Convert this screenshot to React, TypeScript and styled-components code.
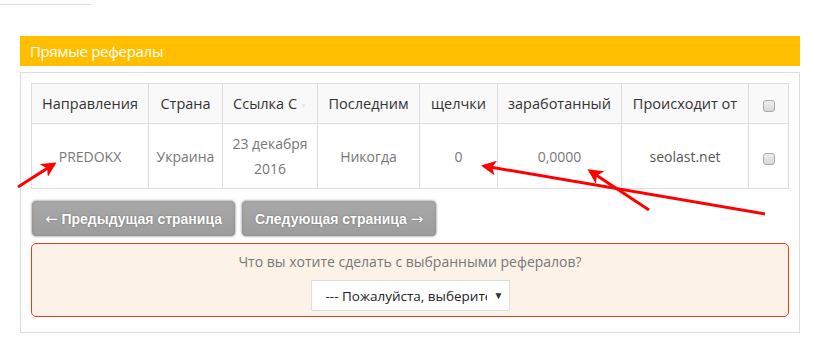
import React from 'react'
import styled, { createGlobalStyle } from 'styled-components'

const GlobalStyle = createGlobalStyle`
  html, body {
    margin: 0;
    padding: 0;
    background: #fff;
  }
  body {
    font-family: 'Open Sans', 'Liberation Sans', sans-serif;
    font-size: 14px;
    color: #333;
  }
`

const columns = [
  { title: 'Направления', width: 117 },
  { title: 'Страна', width: 74 },
  { title: 'Ссылка С', width: 95, sort: true },
  { title: 'Последним', width: 102 },
  { title: 'щелчки', width: 78 },
  { title: 'заработанный', width: 124 },
  { title: 'Происходит от', width: 127 },
]

const referrals = [
  {
    id: 1,
    name: 'PREDOKX',
    country: 'Украина',
    since: ['23 декабря', '2016'],
    last: 'Никогда',
    clicks: '0',
    earned: '0,0000',
    source: 'seolast.net',
  },
]

const App = () => {
  return (
    <Page>
      <GlobalStyle />
      <TopRule />
      <Section>
        <Heading>Прямые рефералы</Heading>
        <Panel>
          <Table>
            <colgroup>
              {columns.map((c) => (
                <col key={c.title} style={{ width: c.width }} />
              ))}
              <col />
            </colgroup>
            <thead>
              <tr>
                {columns.map((c) => (
                  <Th key={c.title}>
                    {c.title}
                    {c.sort && <SortMark>▼</SortMark>}
                  </Th>
                ))}
                <Th>
                  <Check type='checkbox' />
                </Th>
              </tr>
            </thead>
            <tbody>
              {referrals.map((r) => (
                <tr key={r.id}>
                  <Td>{r.name}</Td>
                  <Td>{r.country}</Td>
                  <Td>
                    {r.since[0]}
                    <br />
                    {r.since[1]}
                  </Td>
                  <Td>{r.last}</Td>
                  <Td>{r.clicks}</Td>
                  <Td>{r.earned}</Td>
                  <Td $dark>{r.source}</Td>
                  <Td>
                    <Check type='checkbox' />
                  </Td>
                </tr>
              ))}
            </tbody>
          </Table>

          <Pager>
            <PageButton>
              <Arrow>←</Arrow> Предыдущая страница
            </PageButton>
            <PageButton>
              Следующая страница <Arrow>→</Arrow>
            </PageButton>
          </Pager>

          <ActionBox>
            <ActionText>Что вы хотите сделать с выбранными рефералов?</ActionText>
            <SelectBox>
              <Select defaultValue=''>
                <option value=''>--- Пожалуйста, выберите вариант ---</option>
                <option value='delete'>Удалить</option>
              </Select>
              <SelectArrow>▼</SelectArrow>
            </SelectBox>
          </ActionBox>
        </Panel>
      </Section>

      <Marks viewBox='0 0 814 347' width='814' height='347'>
        <defs>
          <marker
            id='head'
            viewBox='0 0 10 10'
            refX='8'
            refY='5'
            markerWidth='5'
            markerHeight='5'
            orient='auto'
          >
            <path d='M0 0 L10 5 L0 10 L2.5 5 Z' fill='#ff0000' />
          </marker>
        </defs>
        <line x1='18' y1='187' x2='54' y2='164' stroke='#ff0000' strokeWidth='3' markerEnd='url(#head)' />
        <line x1='765' y1='214' x2='484' y2='166' stroke='#ff0000' strokeWidth='3' markerEnd='url(#head)' />
        <line x1='649' y1='210' x2='590' y2='171' stroke='#ff0000' strokeWidth='3' markerEnd='url(#head)' />
      </Marks>
    </Page>
  )
}

export default App

const Page = styled.div`
  position: relative;
  width: 814px;
  height: 347px;
  overflow: hidden;
`

const TopRule = styled.div`
  width: 91px;
  height: 1px;
  margin-top: 4px;
  background: #ddd;
`

const Section = styled.section`
  width: 780px;
  margin: 31px 0 0 20px;
`

const Heading = styled.h2`
  margin: 0;
  height: 30px;
  padding-left: 10px;
  background: #ffbf00;
  color: #fff;
  font-family: 'Open Sans', sans-serif;
  font-weight: 400;
  font-size: 15px;
  line-height: 31px;
  letter-spacing: -0.3px;
`

const Panel = styled.div`
  margin-top: 6px;
  border: 1px solid #ddd;
  padding: 10px 10px 15px;
`

const Table = styled.table`
  width: 100%;
  border-collapse: collapse;
  table-layout: fixed;
  border: 1px solid #ddd;
`

const Th = styled.th`
  height: 39px;
  padding: 0 4px;
  background: #f9f9f9;
  border: 1px solid #ddd;
  font-weight: 400;
  font-size: 14.5px;
  color: #333;
  text-align: center;
  white-space: nowrap;
`

const SortMark = styled.span`
  margin-left: 3px;
  font-size: 7px;
  color: #e8e8e8;
  vertical-align: middle;
`

const Td = styled.td`
  height: 64px;
  padding: 0 4px;
  border: 1px solid #ddd;
  text-align: center;
  font-size: 14px;
  line-height: 25px;
  color: ${(p) => (p.$dark ? '#555' : '#777')};
`

const Check = styled.input`
  appearance: none;
  display: inline-block;
  width: 12px;
  height: 12px;
  margin: 2px 0 0;
  border: 1px solid #a9a9a9;
  border-radius: 3px;
  background: linear-gradient(#eee, #d8d8d8);
  vertical-align: middle;
`

const Pager = styled.div`
  display: flex;
  gap: 5px;
  margin-top: 11px;
`

const PageButton = styled.button`
  height: 37px;
  padding: 0 13px;
  border: 1px solid #d0d0d0;
  border-radius: 5px;
  background: linear-gradient(#a9a9a9, #9c9c9c);
  box-shadow: 0 0 2px rgba(0, 0, 0, 0.25), inset 0 0 3px rgba(0, 0, 0, 0.15);
  color: #fff;
  font-family: 'Liberation Sans', Arial, sans-serif;
  font-weight: 700;
  font-size: 14px;
  text-shadow: 0 0 2px rgba(0, 0, 0, 0.35);
`

const Arrow = styled.span`
  font-family: 'DejaVu Sans', sans-serif;
  font-weight: 400;
  font-size: 15px;
`

const ActionBox = styled.div`
  margin-top: 6px;
  height: 72px;
  border: 1px solid #e2401c;
  border-radius: 5px;
  background: #fdf2e8;
  display: flex;
  flex-direction: column;
  align-items: center;
`

const ActionText = styled.div`
  margin-top: 8px;
  color: #777;
  font-size: 14px;
  line-height: 20px;
`

const SelectBox = styled.div`
  position: relative;
  margin-top: 8px;
  width: 199px;
  height: 31px;
`

const Select = styled.select`
  appearance: none;
  width: 100%;
  height: 100%;
  padding: 0 22px 0 14px;
  border: 1px solid #ddd;
  background: #fff;
  color: #222;
  font-family: 'Open Sans', sans-serif;
  font-size: 13.5px;
`

const SelectArrow = styled.span`
  position: absolute;
  right: 6px;
  top: 8px;
  font-size: 10px;
  color: #333;
  pointer-events: none;
`

const Marks = styled.svg`
  position: absolute;
  left: 0;
  top: 0;
  pointer-events: none;
`
